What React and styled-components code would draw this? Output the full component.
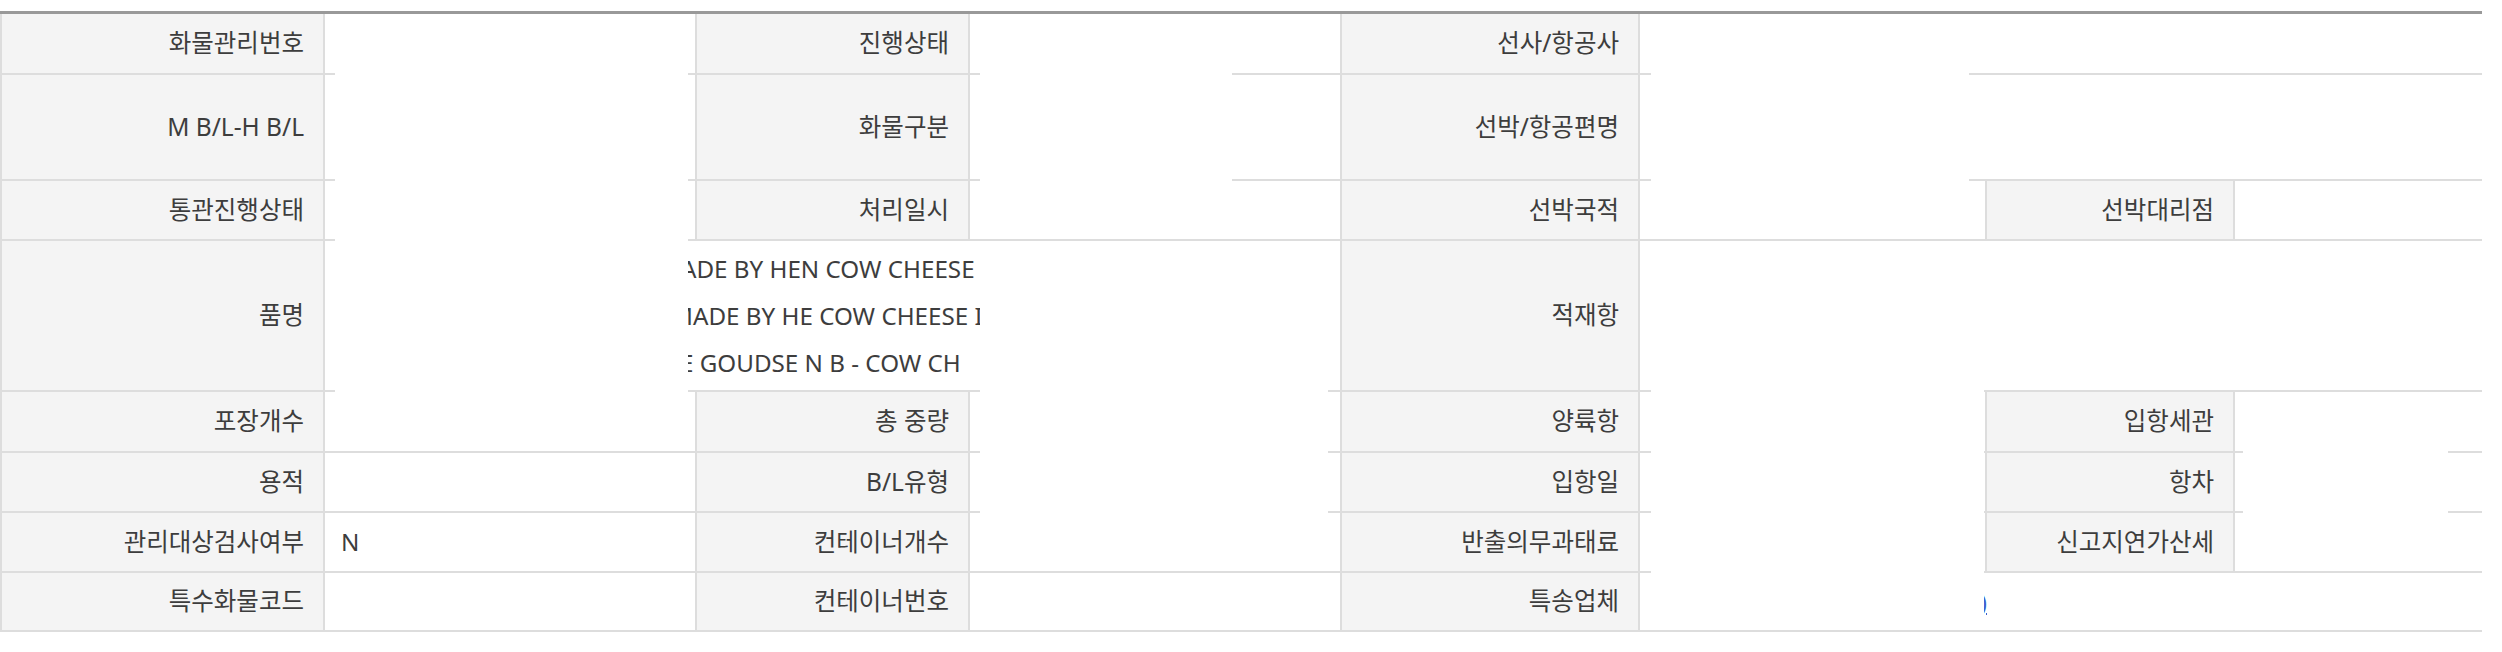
import React from "react";
import styled, { createGlobalStyle } from "styled-components";

const GlobalStyle = createGlobalStyle`
  html, body { margin: 0; padding: 0; background: #fff; }
  body {
    font-family: "Noto Sans", "Noto Sans CJK KR", sans-serif;
    color: #3d3d3d;
  }
  *, *::before, *::after { box-sizing: border-box; }
`;

const Page = styled.div`
  padding-top: 11px;
  width: 2502px;
`;

const Sheet = styled.div`
  position: relative;
  display: grid;
  width: 2482px;
  grid-template-columns: 325px 370px 275px 370px 300px 345px 250px 247px;
  grid-template-rows: 61px 106px 60px 151px 61px 60px 60px 59px;
  border-top: 3px solid #999;
  font-size: 24.2px;
  line-height: 1.4;
`;

const Label = styled.div`
  display: flex;
  align-items: center;
  justify-content: flex-end;
  padding-right: 19px;
  font-size: 24.5px;
  background: #f4f4f4;
  border-left: 2px solid #ddd;
  border-right: 2px solid #ddd;
  border-bottom: 2px solid #ddd;
  white-space: nowrap;
`;

const Value = styled.div`
  grid-column: span ${(p) => p.$span || 1};
  display: flex;
  align-items: center;
  padding-left: 16px;
  background: #fff;
  border-bottom: 2px solid #ddd;
  white-space: nowrap;
  overflow: hidden;
`;

const ItemValue = styled(Value)`
  flex-direction: column;
  align-items: flex-start;
  justify-content: center;
`;

const ItemLine = styled.div`
  line-height: 47px;
  padding-left: ${(p) => p.$indent}px;
`;

const CourierLink = styled.a`
  display: inline-block;
  width: 331px;
  text-align: right;
  color: #3a5fcd;
  text-decoration: underline;
  white-space: nowrap;
  cursor: pointer;
`;

const Mask = styled.div`
  position: absolute;
  left: ${(p) => p.$x}px;
  top: ${(p) => p.$y}px;
  width: ${(p) => p.$w}px;
  height: ${(p) => p.$h}px;
  background: #fff;
  pointer-events: none;
`;

const L = (text) => ({ kind: "label", text });
const V = (span = 1, text = "") => ({ kind: "value", span, text });

const itemLines = [
  { text: "MADE BY HEN COW CHEESE", indent: 318 },
  { text: "MADE BY HE COW CHEESE IN", indent: 330 },
  { text: "E GOUDSE N B - COW CH", indent: 339 },
];

const rows = [
  [L("화물관리번호"), V(), L("진행상태"), V(), L("선사/항공사"), V(3)],
  [L("M B/L-H B/L"), V(), L("화물구분"), V(), L("선박/항공편명"), V(3)],
  [L("통관진행상태"), V(), L("처리일시"), V(), L("선박국적"), V(), L("선박대리점"), V()],
  [L("품명"), { kind: "item", span: 3 }, L("적재항"), V(3)],
  [L("포장개수"), V(), L("총 중량"), V(), L("양륙항"), V(), L("입항세관"), V()],
  [L("용적"), V(), L("B/L유형"), V(), L("입항일"), V(), L("항차"), V()],
  [L("관리대상검사여부"), V(1, "N"), L("컨테이너개수"), V(), L("반출의무과태료"), V(), L("신고지연가산세"), V()],
  [L("특수화물코드"), V(), L("컨테이너번호"), V(), L("특송업체"), { kind: "link", span: 3 }],
];

// redaction boxes, in page coordinates (x1, y1, x2, y2)
const masks = [
  [335, 18, 688, 420],
  [980, 18, 1232, 210],
  [980, 245, 1328, 540],
  [1651, 18, 1969, 210],
  [1651, 245, 1984, 624],
  [2243, 420, 2448, 540],
];
const SHEET_TOP = 14;

function Cell({ cell }) {
  if (cell.kind === "label") return <Label>{cell.text}</Label>;
  if (cell.kind === "item")
    return (
      <ItemValue $span={cell.span}>
        {itemLines.map((l, i) => (
          <ItemLine key={i} $indent={l.indent}>
            {l.text}
          </ItemLine>
        ))}
      </ItemValue>
    );
  if (cell.kind === "link")
    return (
      <Value $span={cell.span}>
        <CourierLink>한진택배(주)</CourierLink>
      </Value>
    );
  return <Value $span={cell.span}>{cell.text}</Value>;
}

export default function App() {
  return (
    <Page>
      <GlobalStyle />
      <Sheet>
        {rows.map((row, r) =>
          row.map((cell, c) => <Cell key={`${r}-${c}`} cell={cell} />)
        )}
        {masks.map(([x1, y1, x2, y2], i) => (
          <Mask key={i} $x={x1} $y={y1 - SHEET_TOP} $w={x2 - x1} $h={y2 - y1} />
        ))}
      </Sheet>
    </Page>
  );
}
